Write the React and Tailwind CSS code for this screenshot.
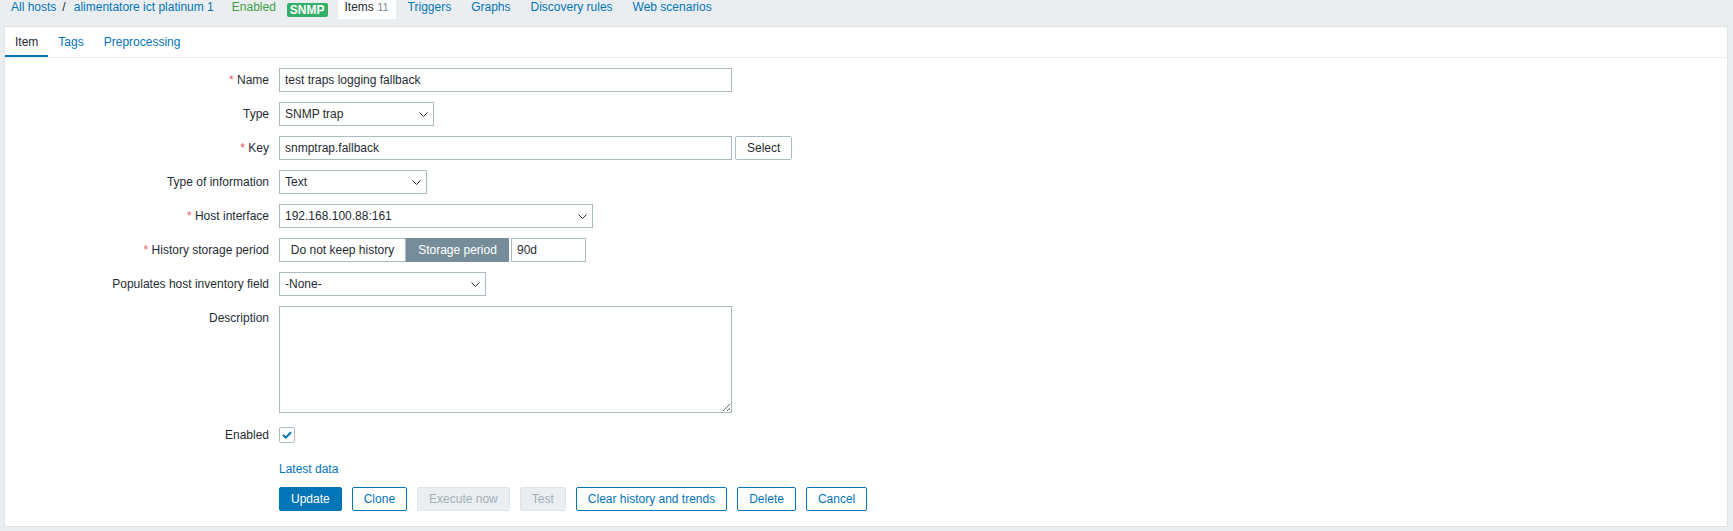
import React from "react";

const Chevron = () => (
  <svg width="9" height="5" viewBox="0 0 9 5" className="shrink-0">
    <polyline points="0.5,0.5 4.5,4.5 8.5,0.5" fill="none" stroke="#1f2c33" strokeWidth="1" />
  </svg>
);

const Select = ({ w, children }) => (
  <div className={`${w} flex h-[24px] items-center justify-between border border-[#acbbc2] bg-white pl-[5px] pr-[5px]`}>
    <span>{children}</span>
    <Chevron />
  </div>
);

const Input = ({ w, children }) => (
  <div className={`${w} flex h-[24px] items-center border border-[#acbbc2] bg-white px-[5px]`}>{children}</div>
);

const Label = ({ req, children }) => (
  <div className="text-right leading-[24px]">
    {req && <span className="text-[#e45959]">* </span>}
    {children}
  </div>
);

const Btn = ({ kind, children }) => {
  const cls =
    kind === "primary"
      ? "bg-[#0275b8] border-[#0275b8] text-white"
      : kind === "disabled"
      ? "bg-[#ebeef0] border-[#dfe4e7] text-[#a3b0b7]"
      : "bg-white border-[#0275b8] text-[#0275b8]";
  return <div className={`flex h-[24px] items-center border px-[11px] rounded-[2px] ${cls}`}>{children}</div>;
};

export default function App() {
  return (
    <div className="min-h-[531px] bg-[#ebeef0] text-[12px] text-[#1f2c33] font-['Liberation_Sans',Arial,sans-serif]">
      {/* top navigation */}
      <div className="flex h-[26px] items-start leading-[15px]">
        <span className="ml-[11px] text-[#0275b8]">All hosts</span>
        <span className="ml-[6px] text-[#1f2c33]">/</span>
        <span className="ml-[8px] text-[#0275b8]">alimentatore ict platinum 1</span>
        <span className="ml-[18px] text-[#429e47]">Enabled</span>
        <span className="ml-[11px] mt-[3px] h-[14px] rounded-[2px] bg-[#34af67] px-[3px] font-bold leading-[14px] text-white">SNMP</span>
        <span className="ml-[10px] h-[19px] bg-white px-[7px] leading-[15px]">
          Items <span className="text-[11px] text-[#768d99]">11</span>
        </span>
        <span className="ml-[12px] text-[#0275b8]">Triggers</span>
        <span className="ml-[20px] text-[#0275b8]">Graphs</span>
        <span className="ml-[20px] text-[#0275b8]">Discovery rules</span>
        <span className="ml-[20px] text-[#0275b8]">Web scenarios</span>
      </div>

      {/* panel */}
      <div className="ml-[4px] mr-[5px] border border-[#dfe4e7] bg-white">
        <div className="flex h-[31px] border-b border-[#ebeef0]">
          <div className="h-[30px] border-b-2 border-[#0275b8] px-[10px] pt-[2px] leading-[26px] text-[#1f2c33]">Item</div>
          <div className="h-[30px] px-[10px] pt-[2px] leading-[26px] text-[#0275b8]">Tags</div>
          <div className="h-[30px] px-[10px] pt-[2px] leading-[26px] text-[#0275b8]">Preprocessing</div>
        </div>

        <div className="grid grid-cols-[264px_1fr] gap-x-[10px] gap-y-[10px] pt-[10px] pb-[15px]">
          <Label req>Name</Label>
          <Input w="w-[453px]">test traps logging fallback</Input>

          <Label>Type</Label>
          <Select w="w-[155px]">SNMP trap</Select>

          <Label req>Key</Label>
          <div className="flex gap-[3px]">
            <Input w="w-[453px]">snmptrap.fallback</Input>
            <div className="flex h-[24px] items-center rounded-[2px] border border-[#acbbc2] bg-white px-[11px]">Select</div>
          </div>

          <Label>Type of information</Label>
          <Select w="w-[148px]">Text</Select>

          <Label req>Host interface</Label>
          <Select w="w-[314px]">192.168.100.88:161</Select>

          <Label req>History storage period</Label>
          <div className="flex gap-[2px]">
            <div className="flex">
              <div className="flex h-[24px] w-[127px] items-center justify-center border border-[#acbbc2] bg-white">Do not keep history</div>
              <div className="flex h-[24px] w-[103px] items-center justify-center border border-[#768d99] bg-[#768d99] text-white">Storage period</div>
            </div>
            <Input w="w-[75px]">90d</Input>
          </div>

          <Label>Populates host inventory field</Label>
          <Select w="w-[207px]">-None-</Select>

          <Label>Description</Label>
          <textarea
            readOnly
            className="block h-[107px] w-[453px] border border-[#acbbc2] bg-white px-[5px] outline-none"
          />

          <Label>Enabled</Label>
          <div className="flex h-[24px] items-center">
            <div className="flex h-[16px] w-[16px] items-center justify-center rounded-[2px] border border-[#acbbc2] bg-white">
              <svg width="10" height="8" viewBox="0 0 10 8">
                <polyline points="1,4 3.8,6.6 9,1.2" fill="none" stroke="#0275b8" strokeWidth="2" />
              </svg>
            </div>
          </div>

          <div />
          <div className="flex flex-col gap-[6px]">
            <div className="leading-[24px] text-[#0275b8]">Latest data</div>
            <div className="flex gap-[10px]">
              <Btn kind="primary">Update</Btn>
              <Btn>Clone</Btn>
              <Btn kind="disabled">Execute now</Btn>
              <Btn kind="disabled">Test</Btn>
              <Btn>Clear history and trends</Btn>
              <Btn>Delete</Btn>
              <Btn>Cancel</Btn>
            </div>
          </div>
        </div>
      </div>
    </div>
  );
}
